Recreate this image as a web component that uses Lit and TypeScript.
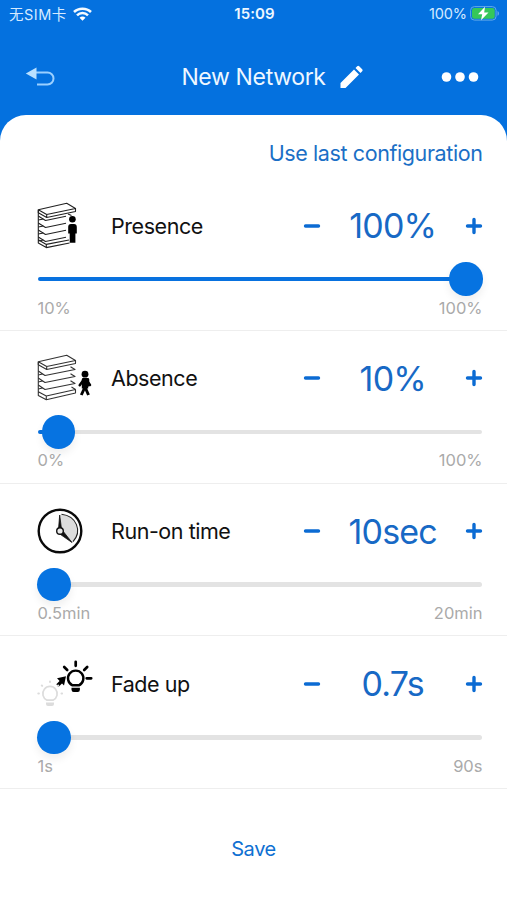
import { LitElement, html, css, svg, nothing } from "lit";
import { customElement, property } from "lit/decorators.js";
import { styleMap } from "lit/directives/style-map.js";

const shelfTop = svg`
  <path d="M1.300 7.700 29.700 1.200 38.500 6.500 9.700 12.500zM1.300 7.700v3l8.400 4.800 28.800-6v-3M9.700 12.500v3" />`;

const shelfPresence = svg`
  <g fill="none" stroke="#222" stroke-width="1.100" stroke-linejoin="round">
    ${shelfTop}
    <path d="M1.300 7.700V41l8 4.600L32.500 41M1.300 37.800l8 4.600L32 38M9.300 42.400v3.200M31 12l3.500 1.500" />
    ${[15, 22, 29, 36].map((y) => svg`<path d="M1.300 ${y - 1} 8.500 ${y + 3.500} 29 ${y - 0.800}M1.300 ${y + 3} 6.500 ${y + 2}" />`)}
  </g>
  <circle cx="35.400" cy="17.300" r="3.300" fill="#000" />
  <path d="M31.200 25q0-3 2.800-3h3q2.800 0 2.800 3v6.500h-1.400v9.300h-5.700v-9.300h-1.500z" fill="#000" />`;

const shelfAbsence = svg`
  <g fill="none" stroke="#333" stroke-width="1.100" stroke-linejoin="round">
    ${shelfTop}
    <path d="M1.300 7.700V41.500l8 4.300L38.500 39v-3.500L9.300 42 1.300 37.800M9.300 42v3.800M38.500 35.500l-4-2.500" />
    ${[18.5, 25.5, 32.5].map((y) => svg`<path d="M1.300 ${y - 1.500} 8 ${y + 3} 38 ${y - 3} 33.500 ${y - 5.800}M1.300 ${y + 2.500} 5.500 ${y + 1.500}" />`)}
  </g>
  <circle cx="48" cy="20.200" r="3.400" fill="#000" />
  <path d="M46.500 26h3l3.500 5M46.500 26 42.700 31.300" fill="none" stroke="#000" stroke-width="2.500" stroke-linecap="round" stroke-linejoin="round" />
  <path d="M45.200 25.500h5.600v7M48 33l-3.700 8M48 33l3.500 8" fill="none" stroke="#000" stroke-width="2.900" stroke-linejoin="round" />
  <path d="M44.800 25h6.400v9.500h-6.400z" fill="#000" />`;

const clock = svg`
  <circle cx="23" cy="24" r="21.300" fill="#fff" stroke="#0a0a0a" stroke-width="2.400" />
  <path d="M23.500 7.300C38 8 45.500 24 35 35.500L23 24z" fill="#ddd" />
  <path d="M24.500 7.300C39.500 9 45.500 24 36 34.700" fill="none" stroke="#222" stroke-width="1.100" />
  <path d="m22.700 8-1.200 14h3zM35 35.500 22.500 26.800l3-3.300z" fill="#111" stroke="#111" stroke-width=".8" stroke-linejoin="round" />
  <circle cx="23" cy="24" r="3.300" fill="#e8e8e8" stroke="#111" stroke-width="1.400" />`;

const bulbs = svg`
  <g fill="none" stroke="#000" stroke-linecap="round">
    <path d="M35.500 25.300A7.700 7.700 0 1 1 41.900 25.300z" stroke-width="2.400" stroke-linejoin="round" />
    <path d="M38.700 1.800v4M27.200 7l3 3M50.200 7l-3 3M49.700 18.300h4.500" stroke-width="2.700" />
    <path d="M20.500 25.500 25.500 20.500" stroke-width="3.300" stroke-linecap="butt" />
  </g>
  <path d="M34.500 27.800h8.400v1.700q0 2.500-2.200 2.500h-4q-2.200 0-2.200-2.500z" fill="#000" />
  <path d="m20 18.300 9-2-2 9.200z" fill="#000" />
  <g fill="none" stroke="#dcdcdc" stroke-linecap="round">
    <path d="M10 40.200A7.200 7.200 0 1 1 16 40.200z" stroke-width="1.700" stroke-linejoin="round" />
    <path d="M13 21.500v.6M4.800 25.500l.4.400M21.200 25.500l-.4.400M1.300 33.500h.6M24.500 33.500h.6" stroke-width="2" />
  </g>
  <path d="M9 42.500h8v1.500q0 2-2 2h-4q-2 0-2-2z" fill="#dcdcdc" />`;

const icons = { presence: shelfPresence, absence: shelfAbsence, clock, bulbs };

interface Setting {
  icon: keyof typeof icons;
  label: string;
  value: string;
  min: string;
  max: string;
  offset: number;
}

const settings: Setting[] = [
  { icon: "presence", label: "Presence", value: "100%", min: "10%", max: "100%", offset: 100 },
  { icon: "absence", label: "Absence", value: "10%", min: "0%", max: "100%", offset: 1.2 },
  { icon: "clock", label: "Run-on time", value: "10sec", min: "0.5min", max: "20min", offset: 0 },
  { icon: "bulbs", label: "Fade up", value: "0.7s", min: "1s", max: "90s", offset: 0 },
];

@customElement("setting-row")
class SettingRow extends LitElement {
  @property({ attribute: false }) setting!: Setting;

  static styles = css`
    :host {
      display: flex;
      flex-direction: column;
      box-sizing: border-box;
      height: 152.800px;
      padding: 21px 24.500px 0 37px;
      border-bottom: 1px solid #eee;
    }
    .top { display: flex; align-items: center; height: 53px; }
    .icon { width: 58px; height: 48px; flex: none; overflow: visible; }
    .label { margin-left: 16px; width: 192px; flex: none; font-size: 21.500px; letter-spacing: -0.45px; color: #111; white-space: nowrap; }
    .stepper { flex: none; width: 18px; height: 18px; fill: none; stroke: #0b6bd3; stroke-width: 3.400; stroke-linecap: round; }
    .value { flex: 1; text-align: center; font-size: 34px; color: #1769c5; letter-spacing: -0.8px; white-space: nowrap; }
    .slider { display: flex; align-items: center; height: 34px; margin-top: 10px; }
    .fill, .rest { height: 4.500px; }
    .fill { flex: none; background: #0871df; border-radius: 3px 0 0 3px; margin-left: 1px; }
    .rest { flex: 1; background: #e3e3e3; border-radius: 0 3px 3px 0; margin-right: 1px; }
    .knob { flex: none; width: 33.500px; height: 33.500px; border-radius: 50%; background: #0673e1; margin: 0 -1px; box-shadow: 0 5px 8px #0001; z-index: 1; }
    .ends { display: flex; justify-content: space-between; font-size: 16.500px; line-height: 20px; color: #aaa; margin-top: 1.500px; padding-left: 0.500px; }
  `;

  render() {
    const s = this.setting;
    if (!s) return nothing;
    return html`
      <div class="top">
        <svg class="icon" viewBox="0 0 58 48">${icons[s.icon]}</svg>
        <div class="label">${s.label}</div>
        <svg class="stepper" viewBox="0 0 18 18"><path d="M2.500 9h13" /></svg>
        <div class="value">${s.value}</div>
        <svg class="stepper" viewBox="0 0 18 18"><path d="M2.500 9h13M9 2.500v13" /></svg>
      </div>
      <div class="slider">
        <div class="fill" style=${styleMap({ width: `calc((100% - 33.5px) * ${s.offset / 100})` })}></div>
        <div class="knob"></div>
        <div class="rest"></div>
      </div>
      <div class="ends"><span>${s.min}</span><span>${s.max}</span></div>
    `;
  }
}

@customElement("app-root")
class AppRoot extends LitElement {
  static styles = css`
    :host {
      display: flex;
      flex-direction: column;
      height: 900px;
      overflow: hidden;
      background: #0471df;
      font-family: Inter, "Noto Sans CJK SC", sans-serif;
    }
    .status { display: grid; grid-template-columns: 1fr auto 1fr; align-items: center; height: 27px; padding: 0 7px 0 9px; color: #d5eaff; font-size: 14.500px; }
    .carrier, .power { display: flex; align-items: center; }
    .carrier { gap: 6.500px; letter-spacing: .5px; }
    .power { justify-content: flex-end; gap: 3px; letter-spacing: -.1px; }
    .time { font-weight: 600; font-size: 15px; letter-spacing: .1px; color: #edf7ff; }
    .nav { display: flex; align-items: center; height: 88px; padding: 12px 28px 0 25px; box-sizing: border-box; }
    .title { flex: 1; display: flex; align-items: center; justify-content: center; gap: 13px; padding-left: 48px; color: #eef7ff; font-size: 23px; letter-spacing: -.35px; }
    .sheet { flex: 1; background: #fff; border-radius: 26px 26px 0 0; }
    .last { height: 63px; box-sizing: border-box; padding: 24px 24.500px 0 0; text-align: right; font-size: 21.500px; line-height: 28px; letter-spacing: -.4px; color: #1b6fc6; }
    .save { padding-top: 46px; text-align: center; font-size: 20px; line-height: 28px; letter-spacing: -.4px; color: #0f70d2; }
    svg { flex: none; }
  `;

  render() {
    return html`
      <div class="status">
        <div class="carrier">
          <span>无SIM卡</span>
          <svg width="19" height="14" viewBox="0 0 19 14" fill="none" stroke="#f4faff" stroke-width="2.500">
            <path d="M1 5C5.500.500 13.500.500 18 5M4 8.300c3-3 8-3 11 0" />
            <path d="M6.500 10.700c1.600-1.500 4.400-1.500 6 0l-3 3z" fill="#fff" stroke="none" />
          </svg>
        </div>
        <div class="time">15:09</div>
        <div class="power">
          <span>100%</span>
          <svg width="30" height="15" viewBox="0 0 30 15">
            <rect x=".6" y=".6" width="25.500" height="13.500" rx="3.800" fill="none" stroke="#62a9e9" />
            <rect x="2" y="2" width="22.700" height="10.700" rx="2.300" fill="#35c759" />
            <path d="M27.500 5c2 .8 2 4 0 4.800z" fill="#62a9e9" />
            <path d="m15 .8-7 7.500h4.200L11 14.200l7.500-7.800h-4.300z" fill="#fff" />
          </svg>
        </div>
      </div>
      <div class="nav">
        <svg width="32" height="22" viewBox="0 0 32 22">
          <path d="M11 6.500h11.500a6 6 0 0 1 0 12H12" fill="none" stroke="#9bd0ff" stroke-width="2" />
          <path d="M.8 7.500 11.500 1.500v12z" fill="#b9e0ff" />
        </svg>
        <div class="title">
          <span>New Network</span>
          <svg width="26" height="26" viewBox="0 0 26 26" fill="#fff">
            <path d="M1.500 19 15 5.500l5 5L6.500 24h-5zM16.500 4l1.700-1.700q1-1 2 0l3 3q1 1 0 2L21.500 9z" />
          </svg>
        </div>
        <svg width="38" height="12" viewBox="0 0 38 12" fill="#fff">
          <circle cx="5.500" cy="6" r="4.800" /><circle cx="19" cy="6" r="4.800" /><circle cx="32.500" cy="6" r="4.800" />
        </svg>
      </div>
      <div class="sheet">
        <div class="last">Use last configuration</div>
        ${settings.map((s) => html`<setting-row .setting=${s}></setting-row>`)}
        <div class="save">Save</div>
      </div>
    `;
  }
}
